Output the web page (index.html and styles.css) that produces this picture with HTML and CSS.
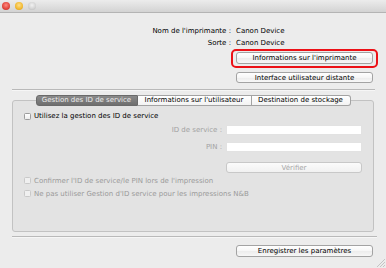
FILE: index.html
```html
<!DOCTYPE html>
<html lang="fr">
<head>
<meta charset="utf-8">
<title>Canon Device</title>
<link rel="stylesheet" href="styles.css">
</head>
<body>
<div class="window">
  <div class="titlebar">
    <span class="light red"></span>
    <span class="light yellow"></span>
    <span class="light gray"></span>
  </div>
  <div class="main">
    <div class="info">
      <span class="label">Nom de l'imprimante :</span><span class="value">Canon Device</span>
      <span class="label">Sorte :</span><span class="value">Canon Device</span>
    </div>
    <div class="highlight">
      <button class="btn">Informations sur l'imprimante</button>
    </div>
    <button class="btn btn-second">Interface utilisateur distante</button>
    <div class="sep sep-top"></div>
    <div class="tabview">
      <div class="tabs">
        <span class="tab tab-1 selected">Gestion des ID de service</span>
        <span class="tab tab-2">Informations sur l'utilisateur</span>
        <span class="tab tab-3">Destination de stockage</span>
      </div>
      <div class="box">
        <label class="check"><span class="cb"></span><span>Utilisez la gestion des ID de service</span></label>
        <div class="form">
          <span class="flabel">ID de service :</span><span class="input"></span>
          <span class="flabel">PIN :</span><span class="input input-pin"></span>
          <span></span><button class="btn btn-disabled">Vérifier</button>
        </div>
        <label class="check disabled first-dis"><span class="cb"></span><span>Confirmer l'ID de service/le PIN lors de l'impression</span></label>
        <label class="check disabled"><span class="cb"></span><span>Ne pas utiliser Gestion d'ID service pour les impressions N&amp;B</span></label>
      </div>
    </div>
    <div class="sep sep-bottom"></div>
    <button class="btn btn-save">Enregistrer les paramètres</button>
  </div>
  <svg class="grip" width="9" height="9" viewBox="0 0 9 9">
    <line x1="1" y1="9" x2="9" y2="1" stroke="#c4c4c4" stroke-width="1"/>
    <line x1="4" y1="9" x2="9" y2="4" stroke="#c4c4c4" stroke-width="1"/>
    <line x1="7" y1="9" x2="9" y2="7" stroke="#c4c4c4" stroke-width="1"/>
  </svg>
</div>
</body>
</html>
```
FILE: styles.css
```css
* { box-sizing: border-box; }
html, body { margin: 0; padding: 0; }
body { background: #ececec; }
.window {
  position: relative;
  width: 386px;
  height: 268px;
  overflow: hidden;
  background: #ececec;
  font-family: "DejaVu Sans", "Liberation Sans", sans-serif;
  font-size: 7px;
  color: #000;
}
.titlebar {
  height: 13px;
  display: flex;
  align-items: center;
  gap: 5px;
  padding-left: 2px;
  background: linear-gradient(#ececec, #d3d3d3);
  border-bottom: 1px solid #b4b4b4;
}
.light {
  width: 8px;
  height: 8px;
  border-radius: 50%;
}
.light.red { background: radial-gradient(circle at 50% 40%, #ff8a80, #e0443a 60%, #b92a22); }
.light.yellow { background: radial-gradient(circle at 50% 40%, #ffe08a, #f1b830 60%, #c98e14); }
.light.gray { background: radial-gradient(circle at 50% 40%, #f2f2f2, #d2d2d2 60%, #b0b0b0); }

.main {
  display: flex;
  flex-direction: column;
  align-items: flex-start;
  padding: 12px 11px 0 12px;
}
.info {
  display: grid;
  grid-template-columns: 219px auto;
  column-gap: 5px;
  line-height: 12px;
  height: 24px;
}
.label { text-align: right; }

.highlight {
  margin-left: 219px;
  width: 147px;
  height: 19px;
  border: 2px solid #ec1117;
  border-radius: 5px;
  padding: 1px 3px;
}
.btn {
  display: block;
  width: 137px;
  height: 12px;
  padding: 0;
  margin: 0;
  font-family: inherit;
  font-size: 7px;
  line-height: 10px;
  color: #000;
  border: 1px solid #a3a3a3;
  border-radius: 3px;
  background: linear-gradient(#ffffff, #f6f6f6 50%, #ececec 51%, #f7f7f7);
  text-align: center;
}
.highlight .btn { width: 137px; }
.btn-second { margin-left: 224px; margin-top: 4px; height: 11px; }
.sep {
  height: 2px;
  border-top: 1px solid #b9b9b9;
  border-bottom: 1px solid #f6f6f6;
}
.sep-top { width: 363px; margin-top: 6px; }
.tabview {
  margin-top: 4px;
  width: 362px;
  display: flex;
  flex-direction: column;
}
.tabs {
  display: flex;
  justify-content: center;
  height: 11px;
  margin-bottom: -6px;
  position: relative;
  z-index: 1;
}
.tab {
  height: 11px;
  line-height: 9px;
  text-align: center;
  background: linear-gradient(#ffffff, #f3f3f3);
  border: 1px solid #a3a3a3;
  border-left: none;
  color: #000;
}
.tab-1 { width: 102px; border-left: 1px solid #7a7a7a; border-radius: 3px 0 0 3px; }
.tab-2 { width: 114px; }
.tab-3 { width: 99px; border-radius: 0 3px 3px 0; }
.tab.selected {
  background: linear-gradient(#8a8a8a, #6e6e6e);
  border-color: #6a6a6a;
  color: #ececec;
}
.box {
  height: 132px;
  border: 1px solid #c2c2c2;
  border-radius: 3px;
  background: #e3e3e3;
  padding: 10px 11px 0 11px;
  display: flex;
  flex-direction: column;
  align-items: flex-start;
}
.check {
  display: flex;
  align-items: center;
  gap: 3px;
  height: 10px;
  color: #000;
}
.cb {
  width: 7px;
  height: 7px;
  border: 1px solid #9c9c9c;
  border-radius: 1.5px;
  background: linear-gradient(#ffffff, #ededed);
}
.check.disabled { height: 13px; color: #9a9a9a; }
.check.disabled .cb { border-color: #c9c9c9; background: #f0f0f0; }
.first-dis { margin-top: 4px; }
.form {
  margin-top: 4px;
  display: grid;
  grid-template-columns: 198px 136px;
  column-gap: 4px;
  grid-template-rows: 10px 10px 11px;
  row-gap: 7px;
  color: #a2a2a2;
  line-height: 10px;
}
.form .btn-disabled { margin-top: 3px; }
.flabel { text-align: right; }
.input {
  height: 10px;
  background: #ffffff;
  border: 1px solid #e2e2e2;
}
.btn-disabled {
  width: 136px;
  height: 11px;
  color: #a6a6a6;
  border-color: #c8c8c8;
  background: linear-gradient(#fbfbfb, #f1f1f1);
}
.sep-bottom { width: 365px; margin-top: 4px; }
.btn-save { margin-left: 224px; margin-top: 7px; height: 12px; }
.grip {
  position: absolute;
  right: 1px;
  bottom: 1px;
}
```
